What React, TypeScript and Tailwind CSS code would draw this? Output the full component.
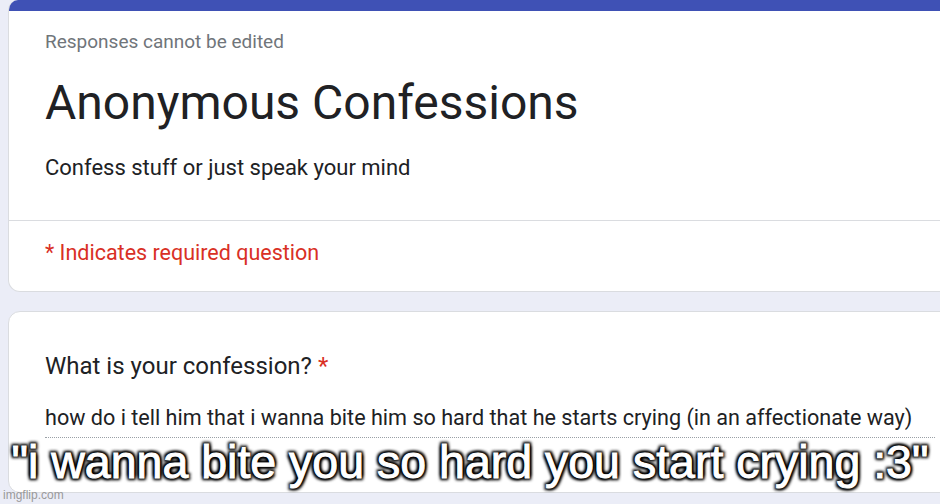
export default function App() {
  return (
    <div
      className="relative h-[504px] w-[940px] overflow-hidden bg-[#ebedf7]"
      style={{ fontFamily: "Roboto, 'Noto Sans', sans-serif" }}
    >
      <div className="ml-[8px] flex w-[960px] flex-col gap-[19px]">
        {/* Header card */}
        <div className="overflow-hidden rounded-b-[12px] rounded-t-[10px] border border-t-0 border-[#dadce0] bg-white">
          <div className="h-[11px] bg-[#3f51b5]" />
          <div className="px-[36px] pt-[20px] pb-[38px]">
            <div className="text-[19px] leading-[22px] text-[#70757a]">Responses cannot be edited</div>
            <h1 className="mt-[22px] text-[48px] leading-[56px] text-[#202124]">Anonymous Confessions</h1>
            <p className="mt-[23px] text-[22px] leading-[28px] text-[#202124]">Confess stuff or just speak your mind</p>
          </div>
          <div className="border-t border-[#dadce0] px-[36px] pt-[18px] pb-[24px]">
            <div className="text-[21.5px] leading-[28px] text-[#d93025]">* Indicates required question</div>
          </div>
        </div>

        {/* Question card */}
        <div className="h-[182px] rounded-[12px] border border-[#dadce0] bg-white px-[36px] pt-[39px]">
          <div className="text-[24px] leading-[30px] text-[#202124]">
            What is your confession? <span className="text-[#d93025]">*</span>
          </div>
          <div className="mt-[24px] w-[890px] border-b border-dotted border-[#9aa0a6] pb-[6px] text-[21.6px] leading-[26px] text-[#202124]">
            how do i tell him that i wanna bite him so hard that he starts crying (in an affectionate way)
          </div>
        </div>
      </div>

      {/* meme caption */}
      <div
        className="absolute left-0 right-0 top-[439px] text-center text-[46.5px] leading-[46px] text-white"
        style={{
          fontFamily: "'Liberation Sans', Arial, sans-serif",
          WebkitTextStroke: "1px #fff",
          textShadow:
            "0 0 2px #000, 0 0 3px #000, 0 0 4px #000, 2px 2px 3px #000, -2px -2px 3px #000, 2px -2px 3px #000, -2px 2px 3px #000",
        }}
      >
        "i wanna bite you so hard you start crying :3"
      </div>
      <div
        className="absolute left-[3px] top-[488px] text-[12px] leading-[15px] text-[#9a9a9a]"
        style={{ fontFamily: "'Liberation Sans', Arial, sans-serif" }}
      >
        imgflip.com
      </div>
    </div>
  );
}
